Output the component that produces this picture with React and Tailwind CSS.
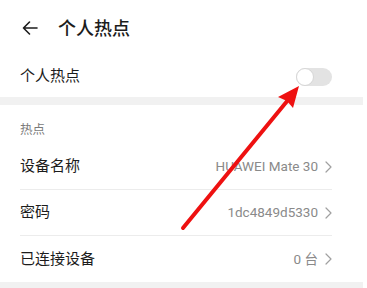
const font = { fontFamily: '"Roboto", "Noto Sans CJK SC", sans-serif' }

function Chevron() {
  return (
    <svg width="7" height="12" viewBox="0 0 7 12" fill="none" stroke="#a0a0a0" strokeWidth="1.2" strokeLinecap="round" strokeLinejoin="round">
      <path d="M1 1l5 5-5 5" />
    </svg>
  )
}

function Toggle() {
  return (
    <div className="w-[36px] h-[18px] rounded-full bg-[#e3e3e3] relative">
      <div className="absolute left-0 top-0 w-[18px] h-[18px] rounded-full bg-white border border-[#d6d6d6]" />
    </div>
  )
}

function Row({ label, value, last }) {
  return (
    <div className="pl-5 pr-[31px]">
      <div className={`h-[46px] flex items-center justify-between ${last ? '' : 'border-b border-[#ececec]'}`}>
        <span className="text-[15px] text-[#1c1c1c]">{label}</span>
        <span className="flex items-center gap-[7px] text-[13.5px] text-[#8a8a8a]">
          {value}
          <Chevron />
        </span>
      </div>
    </div>
  )
}

export default function App() {
  return (
    <div className="w-[367px] h-[288px] bg-white overflow-hidden relative" style={font}>
      <div className="w-[363px] flex flex-col">
        {/* header */}
        <div className="h-[56px] flex items-center pl-[22px] gap-[20px]">
          <svg width="16" height="14" viewBox="0 0 16 14" fill="none" stroke="#1c1c1c" strokeWidth="1.6" strokeLinecap="round" strokeLinejoin="round">
            <path d="M15 7H1.5M7.5 1L1.5 7l6 6" />
          </svg>
          <span className="text-[18px] font-medium text-[#1c1c1c]">个人热点</span>
        </div>

        <div className="h-[41px] flex items-center justify-between pl-5 pr-[31px]">
          <span className="text-[15px] text-[#1c1c1c]">个人热点</span>
          <Toggle />
        </div>

        <div className="h-[8px] bg-[#f1f1f1]" />

        <div className="h-[41px] pl-5 pt-[17px]">
          <span className="block text-[12.5px] leading-[16px] text-[#7a7a7a]">热点</span>
        </div>

        <div className="-mt-[2px]">
          <Row label="设备名称" value="HUAWEI Mate 30" />
          <Row label="密码" value="1dc4849d5330" />
          <Row label="已连接设备" value="0 台" last />
        </div>

        <div className="h-[10px] bg-[#f1f1f1]" />
      </div>

      {/* annotation arrow */}
      <svg className="absolute left-0 top-0 pointer-events-none" width="367" height="288" viewBox="0 0 367 288">
        <line x1="183" y1="228" x2="288" y2="100" stroke="#ee1111" strokeWidth="4" strokeLinecap="round" />
        <polygon points="299,86 293,108 287,101 278,97" fill="#ee1111" />
      </svg>
    </div>
  )
}
